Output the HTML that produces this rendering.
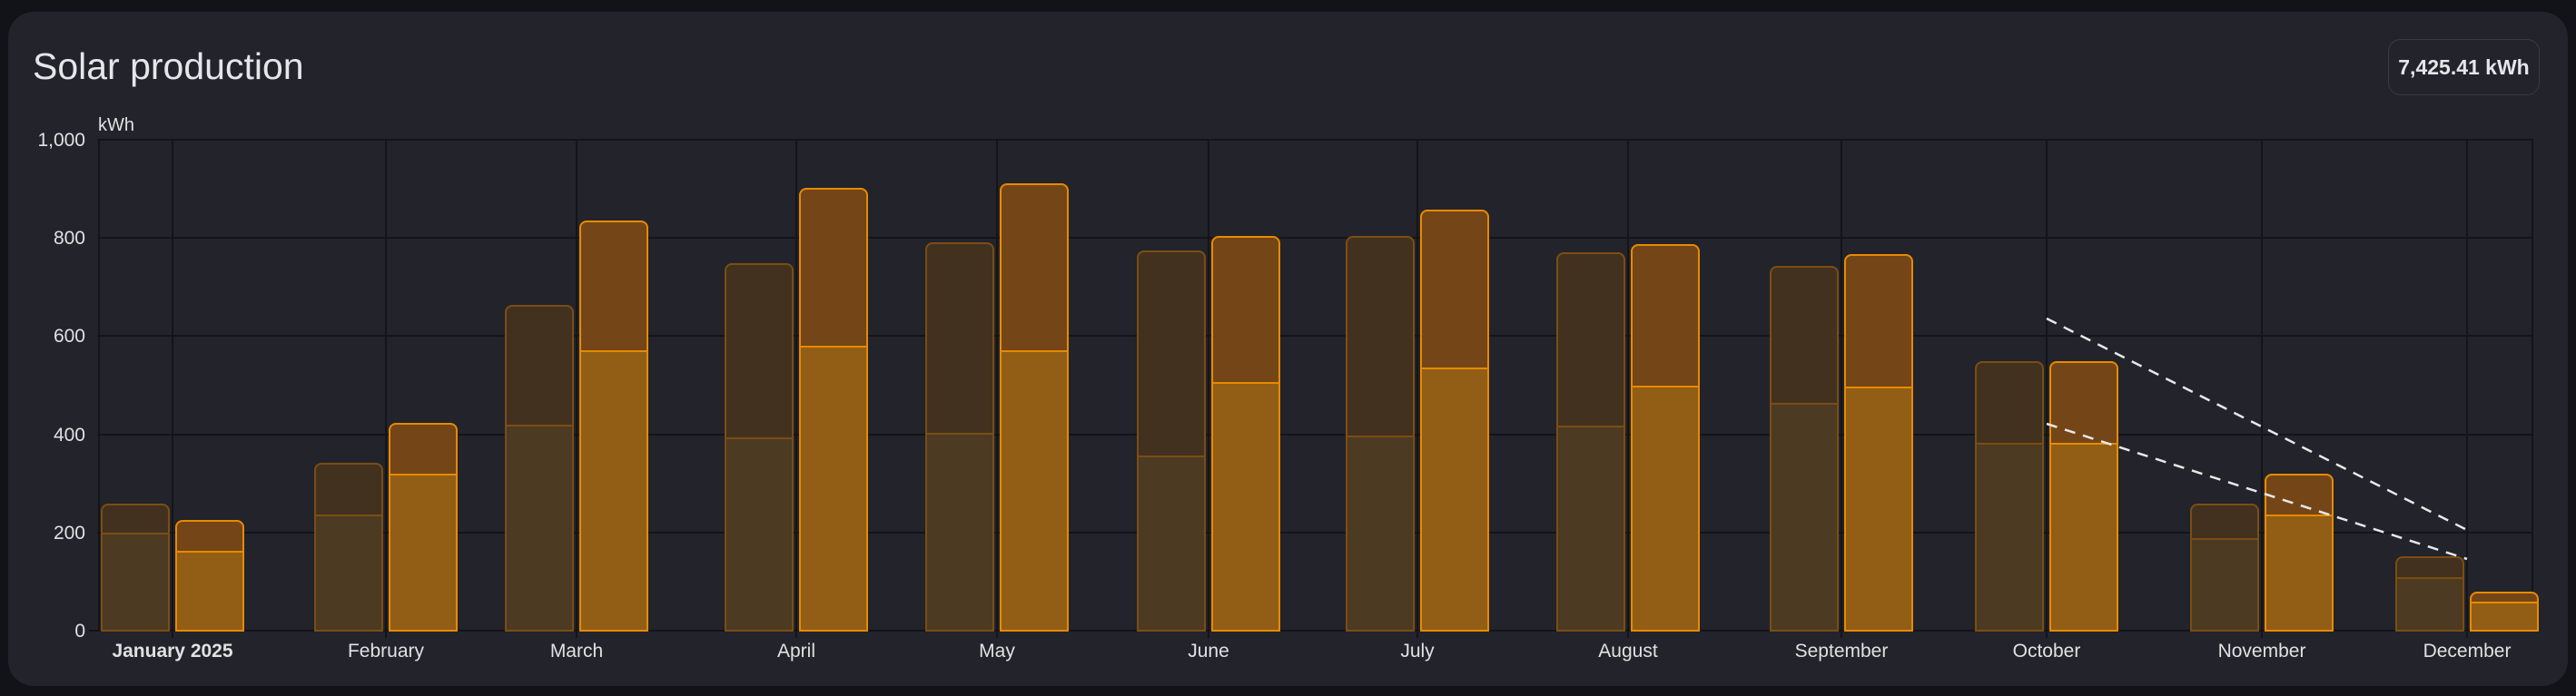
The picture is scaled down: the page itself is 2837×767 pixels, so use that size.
<!DOCTYPE html>
<html><head><meta charset="utf-8"><style>
html,body{margin:0;padding:0;width:2837px;height:767px;background:#111318;overflow:hidden;font-family:"Liberation Sans",sans-serif;}
.card{position:absolute;left:9px;top:13px;width:2819px;height:743px;background:#22232b;border-radius:28px;}
.title{position:absolute;left:36px;top:50px;font-size:41px;color:#e4e6ea;}
.badge{position:absolute;left:2630px;top:43px;width:167px;height:62px;border:1px solid #3a3b42;border-radius:14px;box-sizing:border-box;color:#e4e6ea;font-size:23px;font-weight:bold;line-height:60px;text-align:center;}
svg{position:absolute;left:0;top:0}
</style></head><body>
<div class="card"></div>
<div class="title">Solar production</div>
<div class="badge">7,425.41 kWh</div>
<svg width="2837" height="767" font-family="Liberation Sans, sans-serif">
<g stroke="#141519" stroke-width="2">
<line x1="107" y1="154" x2="2790" y2="154"/><line x1="107" y1="262" x2="2790" y2="262"/><line x1="107" y1="370" x2="2790" y2="370"/><line x1="107" y1="479" x2="2790" y2="479"/><line x1="107" y1="587" x2="2790" y2="587"/><line x1="98" y1="695" x2="2790" y2="695"/>
<line x1="109" y1="154" x2="109" y2="695"/><line x1="2789" y1="154" x2="2789" y2="695"/>
<line x1="190" y1="154" x2="190" y2="703"/><line x1="425" y1="154" x2="425" y2="703"/><line x1="635" y1="154" x2="635" y2="703"/><line x1="877" y1="154" x2="877" y2="703"/><line x1="1098" y1="154" x2="1098" y2="703"/><line x1="1331" y1="154" x2="1331" y2="703"/><line x1="1561" y1="154" x2="1561" y2="703"/><line x1="1793" y1="154" x2="1793" y2="703"/><line x1="2028" y1="154" x2="2028" y2="703"/><line x1="2254" y1="154" x2="2254" y2="703"/><line x1="2491" y1="154" x2="2491" y2="703"/><line x1="2717" y1="154" x2="2717" y2="703"/>
</g>
<g fill="#e1e1e1" font-size="21" text-anchor="end">
<text x="94" y="161">1,000</text><text x="94" y="269">800</text><text x="94" y="377">600</text><text x="94" y="486">400</text><text x="94" y="594">200</text><text x="94" y="702">0</text>
</g>
<text x="108" y="144" fill="#e1e1e1" font-size="20">kWh</text>
<g fill="#e1e1e1" font-size="21" text-anchor="middle">
<text x="190" y="724" font-weight="bold">January 2025</text><text x="425" y="724">February</text><text x="635" y="724">March</text><text x="877" y="724">April</text><text x="1098" y="724">May</text><text x="1331" y="724">June</text><text x="1561" y="724">July</text><text x="1793" y="724">August</text><text x="2028" y="724">September</text><text x="2254" y="724">October</text><text x="2491" y="724">November</text><text x="2717" y="724">December</text>
</g>
<g stroke-width="2">
<g stroke="#7a4e13">
<rect x="112" y="556" width="74" height="139" rx="7" fill="#43311f"/><rect x="112" y="588" width="74" height="107" fill="#4c3a22"/>
<rect x="347" y="511" width="74" height="184" rx="7" fill="#43311f"/><rect x="347" y="568" width="74" height="127" fill="#4c3a22"/>
<rect x="557" y="337" width="74" height="358" rx="7" fill="#43311f"/><rect x="557" y="469" width="74" height="226" fill="#4c3a22"/>
<rect x="799" y="291" width="74" height="404" rx="7" fill="#43311f"/><rect x="799" y="483" width="74" height="212" fill="#4c3a22"/>
<rect x="1020" y="268" width="74" height="427" rx="7" fill="#43311f"/><rect x="1020" y="478" width="74" height="217" fill="#4c3a22"/>
<rect x="1253" y="277" width="74" height="418" rx="7" fill="#43311f"/><rect x="1253" y="503" width="74" height="192" fill="#4c3a22"/>
<rect x="1483" y="261" width="74" height="434" rx="7" fill="#43311f"/><rect x="1483" y="481" width="74" height="214" fill="#4c3a22"/>
<rect x="1715" y="279" width="74" height="416" rx="7" fill="#43311f"/><rect x="1715" y="470" width="74" height="225" fill="#4c3a22"/>
<rect x="1950" y="294" width="74" height="401" rx="7" fill="#43311f"/><rect x="1950" y="445" width="74" height="250" fill="#4c3a22"/>
<rect x="2176" y="399" width="74" height="296" rx="7" fill="#43311f"/><rect x="2176" y="489" width="74" height="206" fill="#4c3a22"/>
<rect x="2413" y="556" width="74" height="139" rx="7" fill="#43311f"/><rect x="2413" y="594" width="74" height="101" fill="#4c3a22"/>
<rect x="2639" y="614" width="74" height="81" rx="7" fill="#43311f"/><rect x="2639" y="637" width="74" height="58" fill="#4c3a22"/>
</g>
<g stroke="#e88a00">
<rect x="194" y="574" width="74" height="121" rx="7" fill="#744617"/><rect x="194" y="608" width="74" height="87" fill="#925e15"/>
<rect x="429" y="467" width="74" height="228" rx="7" fill="#744617"/><rect x="429" y="523" width="74" height="172" fill="#925e15"/>
<rect x="639" y="244" width="74" height="451" rx="7" fill="#744617"/><rect x="639" y="387" width="74" height="308" fill="#925e15"/>
<rect x="881" y="208" width="74" height="487" rx="7" fill="#744617"/><rect x="881" y="382" width="74" height="313" fill="#925e15"/>
<rect x="1102" y="203" width="74" height="492" rx="7" fill="#744617"/><rect x="1102" y="387" width="74" height="308" fill="#925e15"/>
<rect x="1335" y="261" width="74" height="434" rx="7" fill="#744617"/><rect x="1335" y="422" width="74" height="273" fill="#925e15"/>
<rect x="1565" y="232" width="74" height="463" rx="7" fill="#744617"/><rect x="1565" y="406" width="74" height="289" fill="#925e15"/>
<rect x="1797" y="270" width="74" height="425" rx="7" fill="#744617"/><rect x="1797" y="426" width="74" height="269" fill="#925e15"/>
<rect x="2032" y="281" width="74" height="414" rx="7" fill="#744617"/><rect x="2032" y="427" width="74" height="268" fill="#925e15"/>
<rect x="2258" y="399" width="74" height="296" rx="7" fill="#744617"/><rect x="2258" y="489" width="74" height="206" fill="#925e15"/>
<rect x="2495" y="523" width="74" height="172" rx="7" fill="#744617"/><rect x="2495" y="568" width="74" height="127" fill="#925e15"/>
<rect x="2721" y="653" width="74" height="42" rx="7" fill="#744617"/><rect x="2721" y="664" width="74" height="31" fill="#925e15"/>
</g>
</g>
<g stroke="#e8e8e8" stroke-width="2.5" stroke-dasharray="12,9">
<line x1="2254" y1="351" x2="2717" y2="584"/>
<line x1="2254" y1="467" x2="2717" y2="616"/>
</g>
</svg>
</body></html>
